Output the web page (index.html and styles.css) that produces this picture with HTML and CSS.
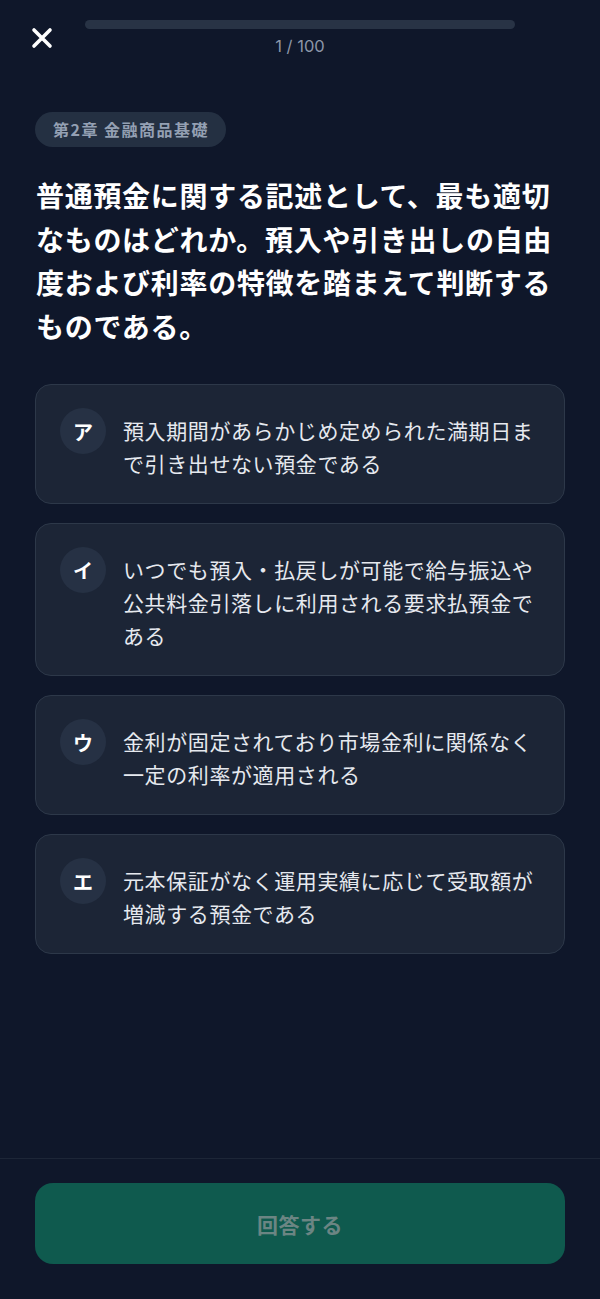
FILE: index.html
```html
<!DOCTYPE html>
<html lang="ja">
<head>
<meta charset="utf-8">
<title>Quiz</title>
<link rel="stylesheet" href="styles.css">
</head>
<body>
<div class="app">
  <header class="header">
    <div class="close-col">
      <svg class="close-icon" width="22" height="22" viewBox="0 0 22 22" aria-label="閉じる">
        <path d="M3 3 L19 19 M19 3 L3 19" stroke="#ffffff" stroke-width="3.6" stroke-linecap="round" fill="none"/>
      </svg>
    </div>
    <div class="progress-col">
      <div class="progress-track"><div class="progress-fill" style="width:0%"></div></div>
      <div class="progress-label">1 / 100</div>
    </div>
    <div class="spacer-col"></div>
  </header>

  <main class="main">
    <div class="chip">第2章 金融商品基礎</div>
    <h1 class="question">普通預金に関する記述として、最も適切なものはどれか。預入や引き出しの自由度および利率の特徴を踏まえて判断するものである。</h1>

    <ul class="options">
      <li class="option">
        <span class="badge">ア</span>
        <span class="option-text">預入期間があらかじめ定められた満期日まで引き出せない預金である</span>
      </li>
      <li class="option">
        <span class="badge">イ</span>
        <span class="option-text">いつでも預入・払戻しが可能で給与振込や公共料金引落しに利用される要求払預金である</span>
      </li>
      <li class="option">
        <span class="badge">ウ</span>
        <span class="option-text">金利が固定されており市場金利に関係なく一定の利率が適用される</span>
      </li>
      <li class="option">
        <span class="badge">エ</span>
        <span class="option-text">元本保証がなく運用実績に応じて受取額が増減する預金である</span>
      </li>
    </ul>
  </main>

  <footer class="footer">
    <button class="submit" disabled>回答する</button>
  </footer>
</div>
</body>
</html>
```

FILE: styles.css
```css
* {
  box-sizing: border-box;
}

html, body {
  margin: 0;
  padding: 0;
  background: #0f172a;
}

body {
  font-family: "Noto Sans CJK JP", "Noto Sans", sans-serif;
  color: #ffffff;
}

.app {
  height: 1299px;
  display: flex;
  flex-direction: column;
  background: #0f172a;
}

.header {
  display: grid;
  grid-template-columns: 85px 1fr 85px;
}

.close-col {
  padding: 27px 0 0 31px;
}

.close-icon {
  display: block;
}

.progress-col {
  padding-top: 20px;
  display: flex;
  flex-direction: column;
  align-items: stretch;
}

.progress-track {
  height: 9px;
  border-radius: 5px;
  background: #283345;
  overflow: hidden;
}

.progress-fill {
  height: 100%;
  background: #10b981;
}

.progress-label {
  margin-top: 7px;
  text-align: center;
  font-family: "Inter", "Noto Sans", sans-serif;
  font-size: 16.5px;
  line-height: 20px;
  color: #8c96a8;
}

.main {
  flex: 1;
  padding: 56px 35px 0 35px;
}

.chip {
  display: inline-block;
  height: 35px;
  padding: 0 17px 0 18px;
  border-radius: 18px;
  background: #243042;
  color: #94a0b3;
  font-size: 16px;
  font-weight: 700;
  line-height: 35px;
  letter-spacing: 1.5px;
}

.question {
  margin: 27px 0 0 1px;
  font-size: 28px;
  font-weight: 700;
  line-height: 43.5px;
  letter-spacing: 0.7px;
  color: #ffffff;
}

.options {
  list-style: none;
  margin: 36px 0 0 0;
  padding: 0;
  display: flex;
  flex-direction: column;
  gap: 19px;
}

.option {
  display: flex;
  align-items: flex-start;
  gap: 17px;
  padding: 23px 24px 23px 24px;
  border: 1px solid #2d3849;
  border-radius: 16px;
  background: #1c2536;
}

.badge {
  flex: none;
  width: 46px;
  height: 46px;
  border-radius: 50%;
  background: #263144;
  color: #ffffff;
  font-size: 20px;
  font-weight: 700;
  display: flex;
  align-items: center;
  justify-content: center;
}

.option-text {
  margin-top: 6px;
  font-size: 21px;
  line-height: 33px;
  letter-spacing: 0.6px;
  color: #e6e9ef;
}

.footer {
  border-top: 1px solid #1d2637;
  padding: 24px 35px 35px 35px;
}

.submit {
  display: block;
  width: 100%;
  height: 81px;
  border: none;
  border-radius: 18px;
  background: #0f5a4e;
  color: #6b8583;
  font-family: "Noto Sans CJK JP", "Noto Sans", sans-serif;
  font-size: 21px;
  font-weight: 700;
  letter-spacing: 0.5px;
}
```
